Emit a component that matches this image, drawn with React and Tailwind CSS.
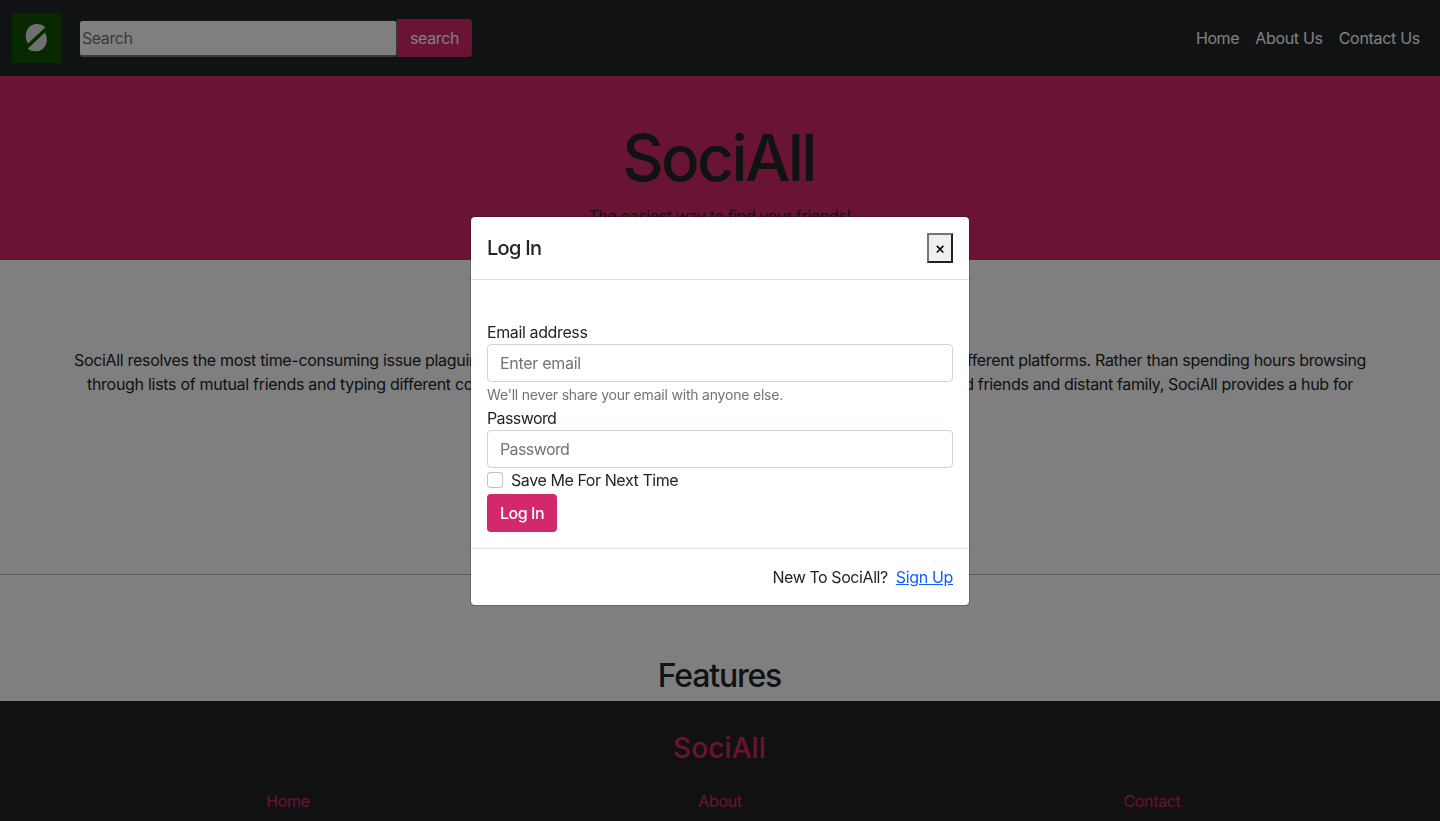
function Logo() {
  return (
    <svg width="50" height="50" viewBox="0 0 50 50" className="shrink-0">
      <rect width="50" height="50" rx="0.5" fill="#115200" />
      <g fill="#dedede">
        <path d="M16 30.500C13.700 27 13 21.500 14.800 17.500C17.300 11.800 23.500 10 28.500 11.600C30.600 12.200 32.200 13.100 33.200 14.400Z" />
        <path d="M32.900 19.400C35 22.500 35.500 27.500 33.900 31.500C31.500 37.300 26 39 21 38.100C18.800 37.700 17 37 15.700 35.700Z" />
      </g>
    </svg>
  );
}

function Navbar() {
  return (
    <nav className="flex h-[76px] items-center bg-[#212529] pl-3 pr-5">
      <Logo />
      <div className="ml-[18px] flex items-start">
        <input
          placeholder="Search"
          className="mt-px h-[37px] w-[317px] rounded-[3px] border border-b-2 border-l-0 border-[#767676] border-t-[#2c2c2c] bg-white px-0.5 pb-px text-base tracking-[-0.45px] placeholder:text-[#757575]"
        />
        <button className="h-[38px] w-[75px] rounded-r bg-[#d3286b] text-base tracking-[-0.4px] text-white">search</button>
      </div>
      <div className="ml-auto flex gap-4 text-base text-white">
        <a className="tracking-[-0.4px]">Home</a>
        <a className="tracking-[-0.3px]">About Us</a>
        <a className="tracking-[-0.3px]">Contact Us</a>
      </div>
    </nav>
  );
}

function Modal() {
  return (
    <div className="fixed inset-0 flex items-start justify-center bg-black/50 pt-[216px]">
      <div className="w-[500px] rounded-[5px] border border-black/20 bg-white bg-clip-padding leading-6">
        <div className="flex h-[63px] items-center justify-between border-b border-[#dee2e6] px-4">
          <h5 className="text-xl font-medium tracking-[-0.7px]">Log In</h5>
          <button className="flex h-[30px] w-[26px] items-center justify-center border-2 border-b-[#212121] border-l-[#767676] border-r-[#212121] border-t-[#767676] bg-[#efefef] text-black">
            <span className="text-base leading-none font-medium">×</span>
          </button>
        </div>
        <div className="flex h-[268px] flex-col items-start px-4 pt-10">
          <label className="tracking-[-0.38px]">Email address</label>
          <input placeholder="Enter email" className="h-[38px] w-full rounded border border-[#ced4da] px-3 tracking-[-0.3px] placeholder:text-[#6c757d]" />
          <small className="mt-0.5 h-[22px] text-sm leading-[21px] tracking-[-0.2px] text-[#6c757d]">We'll never share your email with anyone else.</small>
          <label className="tracking-[-0.6px]">Password</label>
          <input placeholder="Password" className="h-[38px] w-full rounded border border-[#ced4da] px-3 tracking-[-0.6px] placeholder:text-[#6c757d]" />
          <label className="flex h-[26px] gap-2">
            <input type="checkbox" className="mt-1 size-4 appearance-none rounded border border-black/25 bg-white" />
            <span className="tracking-[-0.42px]">Save Me For Next Time</span>
          </label>
          <button className="h-[38px] w-[70px] rounded bg-[#d3286b] font-medium tracking-[-0.45px] text-white">Log In</button>
        </div>
        <div className="flex h-[57px] items-center justify-end gap-2 border-t border-[#dee2e6] px-4">
          <span className="tracking-[-0.42px]">New To SociAll?</span>
          <a className="tracking-[-0.35px] text-[#0d5efd] underline">Sign Up</a>
        </div>
      </div>
    </div>
  );
}

export default function App() {
  return (
    <div className="h-[821px] overflow-hidden bg-white font-['Inter','Liberation_Sans',sans-serif] text-base leading-6 text-[#212529]">
      <Navbar />
      <header className="flex h-[184px] flex-col items-center bg-[#d3286b] pt-[43px]">
        <h1 className="h-[85px] pr-[3px] text-[64px] leading-[77px] font-medium tracking-[-2.6px]">SociAll</h1>
        <p className="pr-px tracking-[-0.37px]">The easiest way to find your friends!</p>
      </header>
      <section className="h-[315px] border-b border-[#bcbcbc] pt-[88px]">
        <p className="flex justify-between px-[74px] tracking-[-0.32px]">
          <span>SociAll resolves the most time-consuming issue plaguing</span>
          <span className="tracking-[-0.34px]">different platforms. Rather than spending hours browsing</span>
        </p>
        <p className="flex justify-between px-[87px] tracking-[-0.29px]">
          <span>through lists of mutual friends and typing different co</span>
          <span className="tracking-[-0.34px]">old friends and distant family, SociAll provides a hub for</span>
        </p>
      </section>
      <section className="h-[126px] pt-[81px] text-center">
        <h2 className="pr-px text-[32px] leading-[39px] font-medium tracking-[-1.2px]">Features</h2>
      </section>
      <footer className="h-[120px] bg-[#222222] pt-[30px] text-center text-[#d3286b]">
        <h3 className="pr-px text-[28px] leading-[34px] font-medium tracking-[0.1px]">SociAll</h3>
        <div className="mt-6 grid grid-cols-3 px-[72px] tracking-[-0.35px]">
          <a>Home</a>
          <a>About</a>
          <a>Contact</a>
        </div>
      </footer>
      <Modal />
    </div>
  );
}
